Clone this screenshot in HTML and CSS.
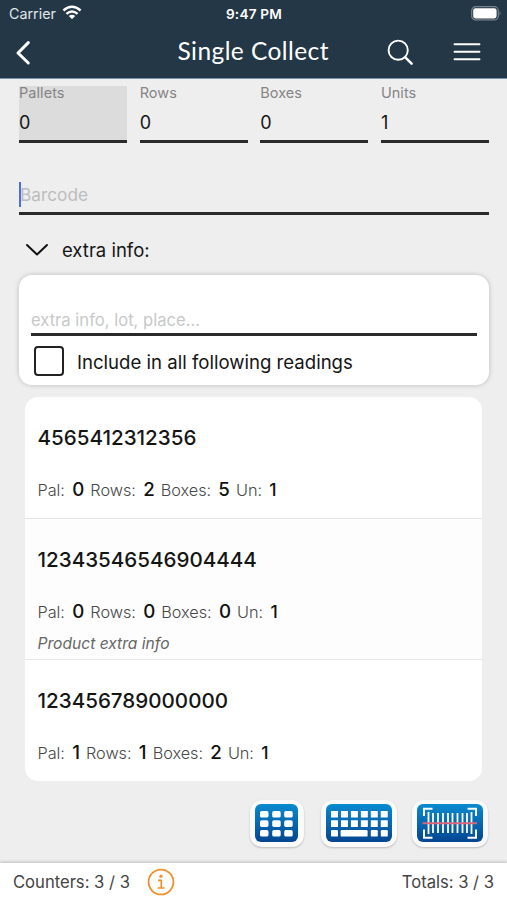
FILE: index.html
```html
<!DOCTYPE html>
<html lang="en">
<head>
<meta charset="utf-8">
<title>Single Collect</title>
<link rel="stylesheet" href="styles.css">
</head>
<body>
<div class="app">
  <header class="header">
    <div class="status">
      <div class="carrier"><span>Carrier</span>
        <svg width="20" height="15" viewBox="0 0 20 15" fill="none" stroke="#fff" stroke-width="2.4"><path d="M1.4 5.5Q10-2 18.6 5.5M4.4 8.8Q10 4 15.6 8.8"/><path d="M6.8 11Q10 8.3 13.2 11L10 14.3Z" fill="#fff" stroke="none"/></svg>
      </div>
      <time class="time">9:47 PM</time>
      <svg class="battery" width="31" height="15" viewBox="0 0 31 15"><rect x=".7" y=".7" width="26.6" height="13.2" rx="4" fill="none" stroke="#77848e" stroke-width="1.2"/><rect x="2.2" y="2.2" width="23.4" height="10.2" rx="2.3" fill="#fff"/><path d="M28.6 5q2 2.3 0 4.6z" fill="#77848e"/></svg>
    </div>
    <nav class="nav">
      <svg class="back" width="18" height="26" viewBox="0 0 18 26" fill="none" stroke="#fff" stroke-width="3" stroke-linecap="round" stroke-linejoin="round"><path d="M13.3 2.6 3 13l10.300 10"/></svg>
      <h1>Single Collect</h1>
      <svg class="search" width="27" height="27" viewBox="0 0 27 27" fill="none" stroke="#fff" stroke-linecap="round"><circle cx="11.2" cy="11.2" r="9.6" stroke-width="1.9"/><path d="m18.3 18.3 6.3 6.3" stroke-width="2.6"/></svg>
      <svg class="menu" width="28" height="20" viewBox="0 0 28 20" stroke="#fff" stroke-width="1.9" stroke-linecap="round"><path d="M1.500 2.200h25M1.500 9.700h25M1.500 17.200h25"/></svg>
    </nav>
  </header>

  <main class="main">
    <section class="counts">
      <label class="count active"><span>Pallets</span><b>0</b></label>
      <label class="count"><span>Rows</span><b>0</b></label>
      <label class="count"><span>Boxes</span><b>0</b></label>
      <label class="count"><span>Units</span><b>1</b></label>
    </section>
    <div class="barcode"><i class="caret"></i><span>Barcode</span></div>
    <div class="toggle">
      <svg width="24" height="14" viewBox="0 0 24 14" fill="none" stroke="#111" stroke-width="2" stroke-linecap="round" stroke-linejoin="round"><path d="M2 2l10 9.500L22 2"/></svg>
      <span>extra info:</span>
    </div>
    <section class="extra">
      <div class="extra-input"><span>extra info, lot, place...</span></div>
      <div class="check"><i class="box"></i><span>Include in all following readings</span></div>
    </section>
    <section class="list">
      <article class="item">
        <h2>4565412312356</h2>
        <p>Pal: <b>0</b> Rows: <b>2</b> Boxes: <b>5</b> Un: <b class="unit">1</b></p>
      </article>
      <article class="item tinted">
        <h2>12343546546904444</h2>
        <p>Pal: <b>0</b> Rows: <b>0</b> Boxes: <b>0</b> Un: <b class="unit">1</b></p>
        <em>Product extra info</em>
      </article>
      <article class="item">
        <h2>123456789000000</h2>
        <p>Pal: <b>1</b> Rows: <b>1</b> Boxes: <b>2</b> Un: <b class="unit">1</b></p>
      </article>
    </section>
    <div class="actions">
      <button class="action pad" aria-label="Keypad">
        <svg width="43" height="38" viewBox="0 0 43 38"><defs><linearGradient id="blue" x2="0" y2="1"><stop stop-color="#098bd0"/><stop offset="1" stop-color="#034591"/></linearGradient></defs><rect width="43" height="38" rx="6" fill="url(#blue)"/><g fill="#fff"><rect x="5" y="7" width="8.5" height="6.6" rx="1.7"/><rect x="17.2" y="7" width="8.5" height="6.6" rx="1.7"/><rect x="29.2" y="7" width="8.5" height="6.6" rx="1.7"/><rect x="5" y="16.3" width="8.5" height="6.6" rx="1.7"/><rect x="17.2" y="16.3" width="8.5" height="6.6" rx="1.7"/><rect x="29.2" y="16.3" width="8.5" height="6.6" rx="1.7"/><rect x="5" y="26" width="8.5" height="6.6" rx="1.7"/><rect x="17.2" y="26" width="8.5" height="6.6" rx="1.7"/><rect x="29.2" y="26" width="8.5" height="6.6" rx="1.7"/></g></svg>
      </button>
      <button class="action keyboard" aria-label="Keyboard">
        <svg width="66" height="38" viewBox="0 0 66 38"><rect width="66" height="38" rx="6" fill="url(#blue)"/><g fill="none" stroke="#fff" stroke-width="6.6"><path stroke-dasharray="7 2.95" d="M5 10.3h57M5 19.6h57"/></g><g fill="#fff"><rect x="5" y="26" width="7" height="6.6" rx="1.2"/><rect x="14.6" y="26" width="27" height="6.6" rx="1.2"/><rect x="44.8" y="26" width="7" height="6.6" rx="1.2"/><rect x="54.8" y="26" width="7" height="6.6" rx="1.2"/></g></svg>
      </button>
      <button class="action scan" aria-label="Scan">
        <svg width="66" height="38" viewBox="0 0 66 38" fill="none" stroke="#fff" stroke-width="2"><rect width="66" height="38" rx="6" fill="url(#blue)" stroke="none"/><path d="M7 12V4.8h8.500M50.500 4.800H59V12M7 25.500v8.300h8.500M50.500 33.800H59v-8.300"/><path d="M11.500 8v22M16 9v20M21 9v20M26 9v20M31 9v20M35.500 9v20M40.500 9v20M45.500 9v20M50 9v20M54.500 8v22" stroke-width="1.800"/><path stroke="#dc6678" d="M5.500 19.300h54.500"/></svg>
      </button>
    </div>
  </main>

  <footer class="footer">
    <span>Counters: 3 / 3</span>
    <svg width="28" height="28" viewBox="0 0 28 28" fill="none" stroke="#f0902d" stroke-width="1.8"><circle cx="14" cy="14" r="12.4"/><circle cx="14" cy="8.2" r="1.6" fill="#f0902d" stroke="none"/><path d="M11 12.3h3.3V20M10.600 20h7" stroke-width="1.7"/></svg>
    <span class="totals">Totals: 3 / 3</span>
  </footer>
</div>
</body>
</html>
```
FILE: styles.css
```css
* { box-sizing: border-box; }
body { margin: 0; background: #eee; font-family: Inter, "Liberation Sans", sans-serif; color: #151515; }
.app { width: 507px; height: 900px; display: flex; flex-direction: column; overflow: hidden; white-space: nowrap; }
.header { height: 79px; background: #243746; color: #fff; border-bottom: 1px solid #7795aa; flex: none; }
.status { height: 27px; display: grid; grid-template-columns: 1fr auto 1fr; align-items: center; padding: 0 7px 0 9px; }
.carrier { display: flex; align-items: center; gap: 6px; font-size: 14.3px; color: #e0e6ea; }
.carrier svg { margin-top: -2px; }
.time { font-size: 13.6px; font-weight: 600; letter-spacing: .2px; margin-right: 1px; }
.battery { justify-self: end; margin: -1px -2px 0 0; }
.nav { height: 51px; display: flex; align-items: center; padding: 0 25px 0 15px; }
.nav h1 { margin: -3px 0 0 144.5px; width: 209.5px; font: 400 24.5px/30px Lato, sans-serif; letter-spacing: .42px; }
.nav .search { margin-top: -1px; }
.nav .menu { margin-left: 39px; margin-top: -1px; }
.main { flex: 1; min-height: 0; padding: 7px 18px 0 19px; }
.counts { display: grid; grid-template-columns: repeat(4, 1fr); gap: 12.5px; height: 57px; }
.count { display: flex; flex-direction: column; border-bottom: 3px solid #2a2a2a; }
.count.active { background: #dcdcdc; }
.count span { font-size: 14.5px; line-height: 14px; color: #858585; letter-spacing: .05px; }
.count b { font-size: 18px; font-weight: 400; line-height: 24px; margin-top: 11px; }
.barcode { margin-top: 35px; height: 36.5px; border-bottom: 3px solid #2a2a2a; display: flex; align-items: center; }
.caret { width: 2px; height: 25px; background: #496cf0; }
.barcode span { color: #bdbdbd; font-size: 17.3px; margin: -1px 0 0 -1px; }
.toggle { height: 60px; display: flex; align-items: center; gap: 13px; padding: 12px 0 2px 6px; font-size: 18.5px; }
.extra { height: 110px; background: #fff; border-radius: 13px; padding: 0 12px; box-shadow: 0 0 5px #bbb; }
.extra-input { height: 61px; border-bottom: 3px solid #2a2a2a; padding-top: 35px; font-size: 16.6px; line-height: 21px; color: #c8c8c8; }
.check { display: flex; align-items: center; height: 51px; padding-left: 3px; gap: 13px; font-size: 18.6px; }
.check span { margin-top: 2px; }
.box { width: 30px; height: 30px; border: 2px solid #222; border-radius: 4px; }
.list { margin: 12px 7px 0 6px; height: 384px; background: #fff; border-radius: 13px; overflow: hidden; }
.item { height: 122px; padding: 29px 12.5px 0; border-bottom: 1px solid #e5e5e5; }
.item.tinted { height: 141px; background: #fdfdfd; }
.item:last-child { border: 0; }
.item h2 { margin: 0; font-size: 20.6px; font-weight: 500; line-height: 24px; }
.item p { margin: 27px 0 0; font-size: 16.3px; line-height: 26px; color: #484848; font-weight: 350; letter-spacing: -.06px; }
.item p b { font-size: 18.7px; font-weight: 500; color: #111; margin: 0 1.7px 0 2.8px; }
.item p .unit { font-size: 17.5px; }
.item em { display: block; margin-top: 9px; font-size: 15.6px; line-height: 20px; color: #666; }
.actions { display: flex; justify-content: flex-end; padding: 19px 1px 0 0; }
.action { width: 76px; height: 47px; padding: 0 1px 1px 0; border: 0; border-radius: 12px; background: #fafafa; display: flex; align-items: center; justify-content: center; box-shadow: 0 1px 2px #bbb; }
.action.pad { width: 54px; }
.action.keyboard { margin: 0 15px 0 17px; }
.action svg { display: block; }
.footer { height: 37px; flex: none; background: #fff; display: flex; align-items: center; padding: 0 13px; font-size: 16.6px; color: #444; box-shadow: 0 -1px 3px #bbb; }
.footer svg { margin-left: 17px; }
.totals { margin-left: auto; }
```
